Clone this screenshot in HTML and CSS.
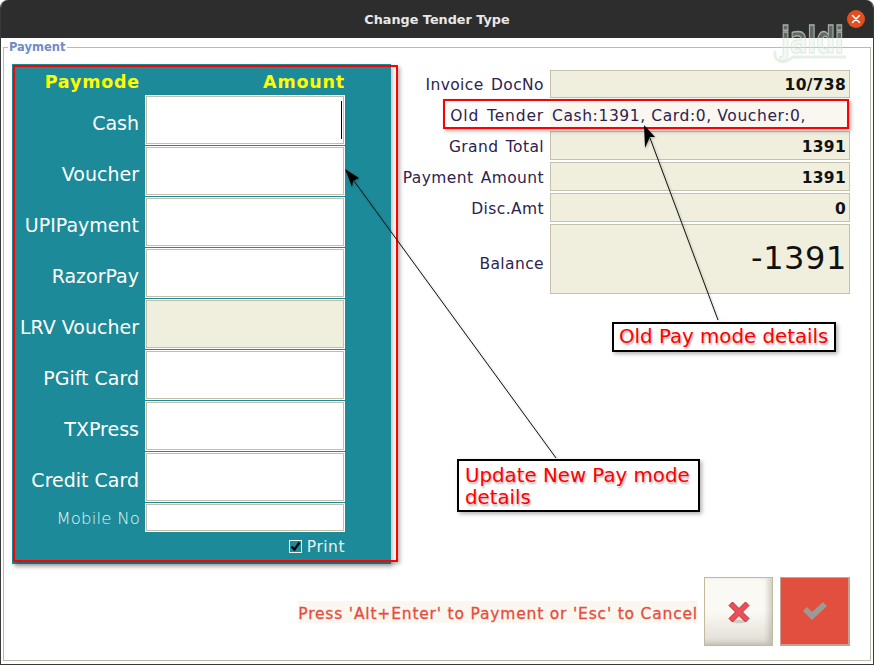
FILE: index.html
```html
<!DOCTYPE html>
<html lang="en">
<head>
<meta charset="utf-8">
<title>Change Tender Type</title>
<link rel="stylesheet" href="styles.css">
</head>
<body>
<div class="window">
  <header class="titlebar">
    <span class="title">Change Tender Type</span>
    <span class="close"><svg width="18" height="18" viewBox="0 0 18 18"><path d="M5.500 5.500l7 7M12.500 5.500l-7 7" stroke="#fff" stroke-width="1.500" stroke-linecap="round"/></svg></span>
  </header>
  <div class="content">
    <fieldset class="group">
      <legend class="group-title">Payment</legend>
      <div class="main">
        <section class="panel">
          <div class="head">Paymode</div><div class="head">Amount</div>
          <label class="mode">Cash</label><div class="input"><span class="caret"></span></div>
          <label class="mode">Voucher</label><div class="input"></div>
          <label class="mode">UPIPayment</label><div class="input"></div>
          <label class="mode">RazorPay</label><div class="input"></div>
          <label class="mode">LRV Voucher</label><div class="input disabled"></div>
          <label class="mode">PGift Card</label><div class="input"></div>
          <label class="mode">TXPress</label><div class="input"></div>
          <label class="mode">Credit Card</label><div class="input"></div>
          <label class="mode small">Mobile No</label><div class="input"></div>
          <div class="print"><span class="check"><svg width="11" height="11" viewBox="0 0 11 11"><path d="M1.500 5.500l3 3 5-7" fill="none" stroke="#000" stroke-width="2.200"/></svg></span>Print</div>
        </section>
        <section class="summary">
          <label class="sum-label">Invoice DocNo</label><div class="value">10/738</div>
          <label class="sum-label sum-wide">Old Tender</label><div class="value old">Cash:1391, Card:0, Voucher:0,</div>
          <label class="sum-label">Grand Total</label><div class="value">1391</div>
          <label class="sum-label">Payment Amount</label><div class="value">1391</div>
          <label class="sum-label">Disc.Amt</label><div class="value">0</div>
          <label class="sum-label sum-balance">Balance</label><div class="value balance">-1391</div>
        </section>
      </div>
      <footer class="actions">
        <span class="hint">Press 'Alt+Enter' to Payment or 'Esc' to Cancel</span>
        <button class="btn btn-cancel"><svg width="24" height="24" viewBox="0 0 24 24"><ellipse cx="12" cy="21.500" rx="7" ry="1.800" fill="#cfccc3"/><path d="M2 5.500L5.500 2 12 8.500 18.500 2 22 5.500 15.500 12 22 18.500 18.500 22 12 15.500 5.500 22 2 18.500 8.500 12z" fill="#e8505a" stroke="#c22a30" stroke-width="1"/></svg></button>
        <button class="btn btn-ok"><svg width="26" height="20" viewBox="0 0 26 20"><path d="M1 10l4-4 5 5L21 1l4 4-15 14z" fill="#9a9a96"/></svg></button>
      </footer>
    </fieldset>
  </div>
  <div class="logo"><svg class="logo-tail" width="76" height="20" viewBox="0 0 76 20"><path d="M3 6c-1 8 5 11 12 9l6-4h52" fill="none" stroke="#dcebdc" stroke-width="3" stroke-linecap="round"/></svg><span class="logo-text">jaldi</span></div>
  <div class="mark mark-panel"></div>
  <div class="mark mark-old"></div>
  <svg class="arrows" width="874" height="665" viewBox="0 0 874 665">
    <g fill="none" stroke="#111" stroke-width="1">
      <path d="M556 458L354 181"/>
      <path d="M718 320L650 138"/>
    </g>
    <path d="M345 169L359 178 353 181 352 187z" fill="#000"/>
    <path d="M644 125L655 137 650 137 645 148z" fill="#000"/>
  </svg>
  <div class="note note-old">Old Pay mode details</div>
  <div class="note note-new">Update New Pay mode details</div>
</div>
</body>
</html>
```
FILE: styles.css
```css
* { box-sizing: border-box; }
html, body { margin: 0; padding: 0; background: #fff; }
body { font-family: "DejaVu Sans", sans-serif; }
.window {
  position: relative;
  width: 874px;
  height: 665px;
  display: flex;
  flex-direction: column;
  overflow: hidden;
  background: #fff;
  border: 1px solid #3a3a3a;
  border-top: 0;
  border-radius: 8px 8px 0 0;
}
.titlebar {
  height: 38px;
  flex: none;
  background: #2d2d2d;
  display: flex;
  align-items: center;
  justify-content: center;
  position: relative;
}
.title { color: #e8e8e8; font: bold 12.800px "DejaVu Sans", sans-serif; }
.close {
  position: absolute;
  right: 8px;
  top: 10px;
  width: 18px;
  height: 18px;
  border-radius: 50%;
  background: #e2501f;
  display: flex;
}
.content { flex: 1; padding: 0 2px 3px 2px; display: flex; }
.group {
  flex: 1;
  margin: 2px 0 0;
  min-width: 0;
  padding: 10px 20px 0 8px;
  border: 1px solid #bfb9a9;
  display: flex;
  flex-direction: column;
}
.group-title {
  padding: 0 1px;
  margin-left: -4px;
  color: #6f8cc4;
  font: bold 11.500px/14px "DejaVu Sans", sans-serif;
}
.main { display: flex; gap: 10px; }
.panel {
  width: 379px;
  height: 500px;
  flex: none;
  background: #1c8a98;
  display: grid;
  grid-template-columns: 128px 200px;
  grid-template-rows: 30px repeat(8, 50px) 29px 1fr;
  column-gap: 5px;
  row-gap: 1px;
  align-items: center;
  box-shadow: 2px 3px 4px rgba(0,0,0,.25);
}
.head {
  color: #ffff00;
  font: bold 17.500px "DejaVu Sans", sans-serif;
  letter-spacing: .8px;
  text-align: right;
  padding-top: 5px;
}
.mode {
  color: #fff;
  font-size: 19px;
  text-align: right;
  white-space: nowrap;
  padding: 5px 1px 0 0;
}
.mode.small {
  font-size: 16.500px;
  color: #e4f4f5;
  font-weight: 300;
  padding: 1px 0 0;
  letter-spacing: .2px;
}
.input {
  height: 100%;
  background: #fff;
  border: 1px solid #fff;
  box-shadow: inset 0 0 0 1px #c4bda8;
  position: relative;
}
.input.disabled { background: #f0eedd; }
.caret {
  position: absolute;
  right: 2px;
  top: 5px;
  width: 1px;
  height: 38px;
  background: #000;
}
.print {
  grid-column: 2;
  display: flex;
  align-items: center;
  justify-content: flex-end;
  gap: 5px;
  color: #e4f4f5;
  font-size: 15.500px;
  letter-spacing: .5px;
  padding: 0 0 4px;
}
.check {
  width: 13px;
  height: 13px;
  background: #1c8a98;
  border: 1px solid #f4f1e6;
  display: flex;
}
.summary {
  flex: 1;
  margin-top: 6px;
  display: grid;
  grid-template-columns: 1fr 300px;
  grid-template-rows: 28px repeat(4, 29px) 70px;
  column-gap: 5px;
  row-gap: 2px;
  align-items: center;
}
.sum-label {
  text-align: right;
  color: #2c2350;
  font-size: 15.500px;
  letter-spacing: .4px;
  word-spacing: 2px;
  white-space: nowrap;
  padding: 2px 1px 0 0;
}
.sum-wide { letter-spacing: .85px; }
.sum-balance { padding-top: 10px; }
.value {
  height: 100%;
  background: #f0eedd;
  border: 1px solid #c6c0ae;
  display: flex;
  align-items: center;
  justify-content: flex-end;
  padding: 2px 3px 0;
  color: #111;
  font-weight: bold;
  font-size: 15.500px;
  letter-spacing: .3px;
}
.value.old {
  justify-content: flex-start;
  background: #faf7f0;
  padding: 2px 1px 0;
  font-weight: normal;
  color: #2c2350;
  border-color: transparent;
  letter-spacing: .6px;
}
.value.balance { font-weight: normal; font-size: 32px; padding: 0 2px 2px 0; letter-spacing: .6px; }
.actions {
  display: flex;
  align-items: center;
  justify-content: flex-end;
  margin-top: 13px;
}
.hint {
  background: #faf7f0;
  color: #e74c3c;
  font-size: 15.500px;
  line-height: 22px;
  padding-top: 2px;
  height: 22px;
  letter-spacing: .81px;
  -webkit-text-stroke: .3px #e74c3c;
  margin-right: 6px;
  white-space: nowrap;
}
.btn {
  width: 69px;
  height: 69px;
  padding: 0;
  display: flex;
  align-items: center;
  justify-content: center;
}
.btn-cancel {
  border: 1px solid #c3b99f;
  background: linear-gradient(#fbf9f3 50%, #dfdcd3);
  box-shadow: inset -4px -2px 5px rgba(120,115,100,.3);
}
.btn-ok {
  width: 70px;
  margin-left: 7px;
  background: #e34f3e;
  border: 1px solid #c9a08f;
  border-width: 1px 2px 2px 1px;
}
.logo {
  position: absolute;
  left: 771px;
  top: 19px;
  width: 76px;
  height: 46px;
  pointer-events: none;
  opacity: .7;
}
.logo-tail { position: absolute; left: 0; top: 27px; }
.logo-text {
  position: absolute;
  left: 9px;
  top: 2px;
  color: rgba(215,235,218,.45);
  font: bold 38px/38px "DejaVu Sans", sans-serif;
  letter-spacing: -.5px;
  -webkit-text-stroke: 1.500px #d6e6d6;
  transform: scaleX(.7);
  transform-origin: left top;
}
.mark {
  position: absolute;
  border: 2px solid #f00;
  box-shadow: 2px 2px 4px rgba(0,0,0,.3);
  pointer-events: none;
}
.mark-panel { left: 12px; top: 65px; width: 385px; height: 497px; }
.mark-old { left: 442px; top: 99px; width: 406px; height: 30px; }
.arrows { position: absolute; left: -1px; top: 0; pointer-events: none; filter: drop-shadow(1px 1px 1px rgba(0,0,0,.25)); }
.note {
  position: absolute;
  background: #fff;
  border: 2px solid #000;
  color: #f00;
  font-size: 19.800px;
  line-height: 22px;
  text-shadow: 1px 2px 2px rgba(0,0,0,.3);
  box-shadow: 2px 2px 4px rgba(0,0,0,.3);
}
.note-old { left: 611px; top: 322px; width: 224px; height: 30px; padding: 2px 5px 0; white-space: nowrap; }
.note-new { left: 456px; top: 459px; width: 243px; height: 53px; padding: 4px 6px 0; }
```
